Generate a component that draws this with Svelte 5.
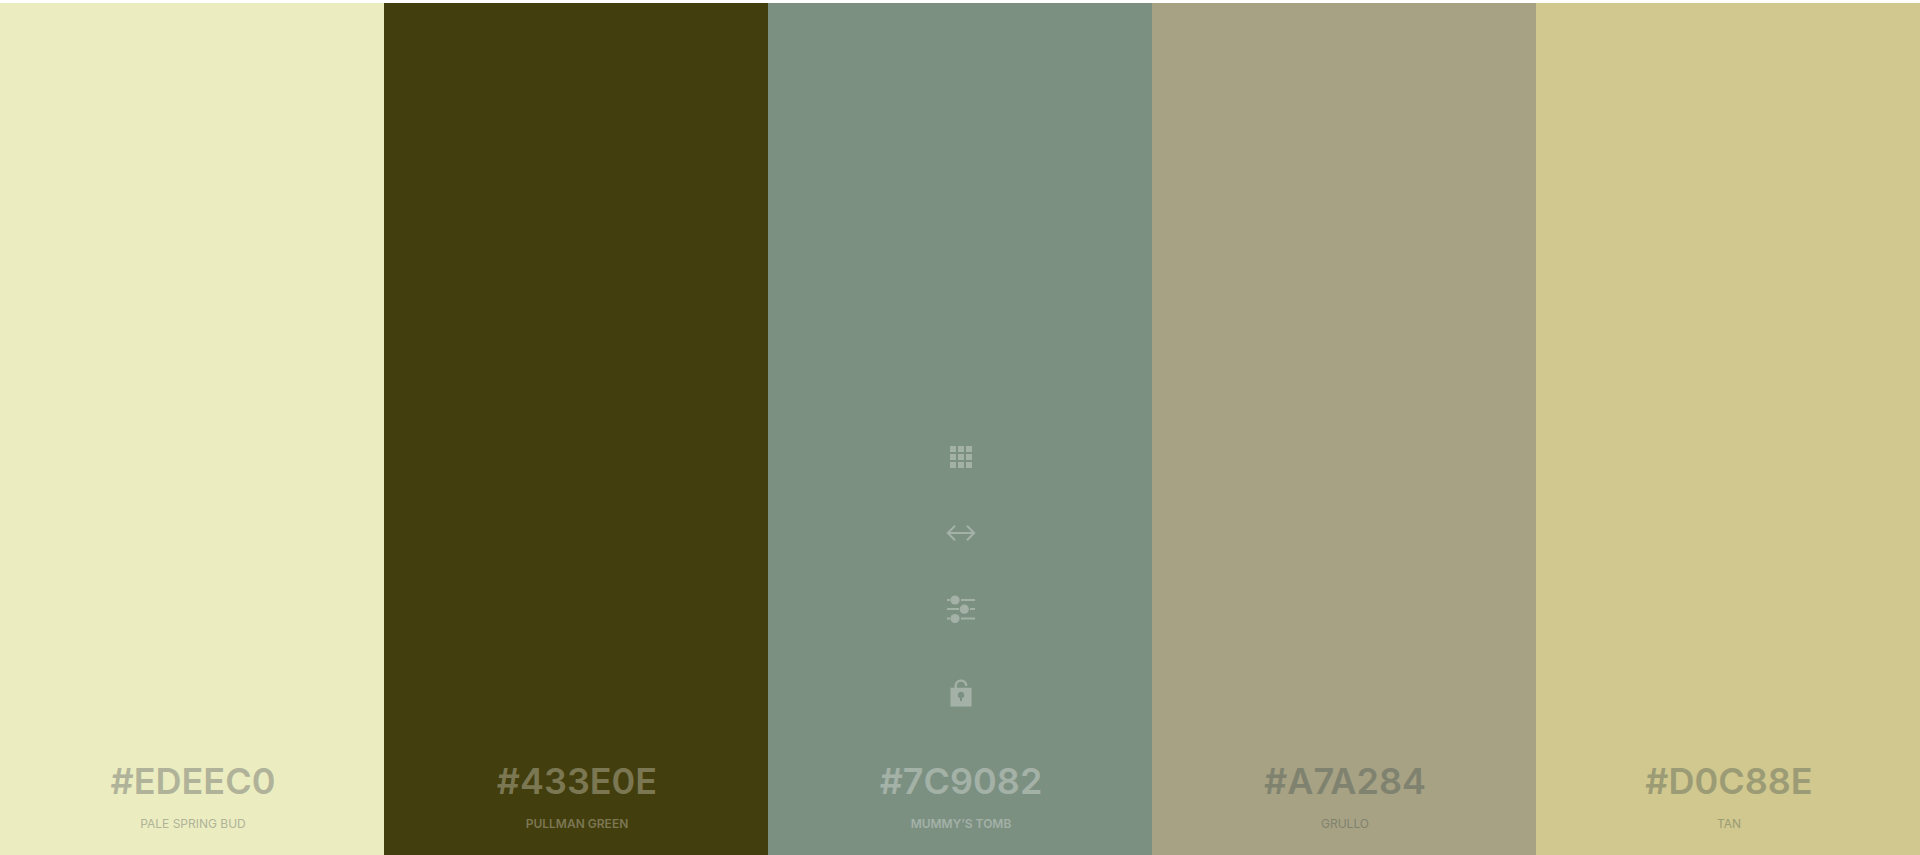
<script>
  const colors = [
    { hex: '#EDEEC0', name: 'Pale Spring Bud', bg: '#ebedc0', ink: '#b0b399' },
    { hex: '#433E0E', name: 'Pullman Green', bg: '#433e0e', ink: '#7b7752', bold: true },
    { hex: '#7C9082', name: 'Mummy’s Tomb', bg: '#7c9082', ink: '#a3b1a7', bold: true, tools: true },
    { hex: '#A7A284', name: 'Grullo', bg: '#a7a284', ink: '#808270' },
    { hex: '#D0C88E', name: 'Tan', bg: '#d0c88e', ink: '#9b9b76' }
  ];
  const cells = [0, 8, 16];
</script>

<main>
  {#each colors as c}
    <section style="background:{c.bg};color:{c.ink}">
      {#if c.tools}
        <div class="tools">
          <button aria-label="View shades">
            <svg width="22" height="22" viewBox="0 0 22 22">
              {#each cells as y}{#each cells as x}<rect {x} {y} width="6" height="6" />{/each}{/each}
            </svg>
          </button>
          <button aria-label="Drag color">
            <svg width="30" height="18" viewBox="0 0 30 18" class="line">
              <path d="M2 9H28M9 1.8 1.8 9 9 16.2M21 1.8 28.2 9 21 16.2" />
            </svg>
          </button>
          <button aria-label="Adjust color">
            <svg width="28" height="28" viewBox="0 0 28 28">
              <path d="M0 4H3V6H0zM14 4H28V6H14zM0 13H12V15H0zM23 13H28V15H23zM0 22.5H3V24.5H0zM14 22.5H28V24.5H14z" />
              <circle cx="8" cy="5" r="4.6" /><circle cx="17.3" cy="14.2" r="4.6" /><circle cx="8" cy="23.5" r="4.6" />
            </svg>
          </button>
          <button aria-label="Lock color">
            <svg width="22" height="28" viewBox="0 0 22 28">
              <path class="shackle" d="M5.7 9V6.5A5.3 5.3 0 0 1 16.2 6" />
              <path fill-rule="evenodd" d="M.5 8.7H21.5V27.5H.5zM10 19.3V22H12V19.3A3.3 3.3 0 1 0 10 19.3z" />
            </svg>
          </button>
        </div>
      {/if}
      <h2>{c.hex}</h2>
      <p class:bold={c.bold}>{c.name}</p>
    </section>
  {/each}
</main>

<style>
  :global(body) { margin: 0; background: #fff; }
  main {
    display: grid;
    grid-template-columns: repeat(5, 1fr);
    box-sizing: border-box;
    min-height: 100vh;
    padding-top: 3px;
    font-family: Inter, sans-serif;
  }
  section {
    display: flex;
    flex-direction: column;
    align-items: center;
    justify-content: flex-end;
    padding: 0 0 21px 2px;
  }
  .tools {
    display: flex;
    flex-direction: column;
    align-items: center;
    gap: 36px;
    margin-bottom: 46px;
  }
  button {
    display: flex;
    align-items: center;
    justify-content: center;
    width: 48px;
    height: 40px;
    padding: 0;
    border: 0;
    background: none;
    color: inherit;
    cursor: pointer;
  }
  button:last-child { margin-top: 8px; }
  svg { display: block; fill: currentColor; }
  .line { fill: none; stroke: currentColor; stroke-width: 2; }
  .shackle { fill: none; stroke: currentColor; stroke-width: 2.4; stroke-linecap: round; }
  h2 { margin: 0; font-size: 36px; line-height: 44px; font-weight: 600; }
  p { margin: 11px 0 0; font-size: 12px; line-height: 20px; font-weight: 400; text-transform: uppercase; }
  .bold { font-weight: 600; }
</style>
